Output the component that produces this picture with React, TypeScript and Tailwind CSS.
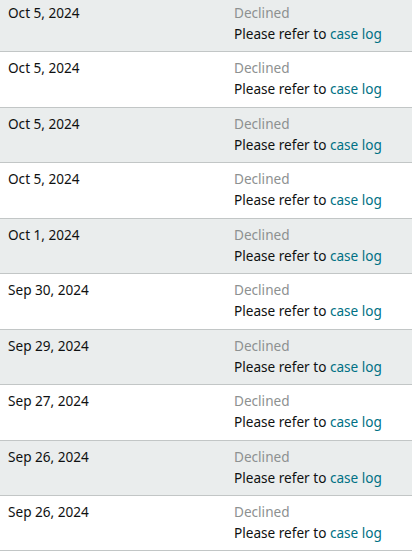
import React from "react";

interface Entry {
  date: string;
  status: string;
}

const entries: Entry[] = [
  { date: "Oct 5, 2024", status: "Declined" },
  { date: "Oct 5, 2024", status: "Declined" },
  { date: "Oct 5, 2024", status: "Declined" },
  { date: "Oct 5, 2024", status: "Declined" },
  { date: "Oct 1, 2024", status: "Declined" },
  { date: "Sep 30, 2024", status: "Declined" },
  { date: "Sep 29, 2024", status: "Declined" },
  { date: "Sep 27, 2024", status: "Declined" },
  { date: "Sep 26, 2024", status: "Declined" },
  { date: "Sep 26, 2024", status: "Declined" },
];

export default function App() {
  return (
    <div className="w-[412px] h-[555px] overflow-hidden bg-white font-['Noto_Sans',sans-serif] text-[13.6px] leading-[21px] text-[#0f1111]">
      <div className="-mt-[3px]">
        {entries.map((entry, index) => (
          <div
            key={index}
            className={`grid grid-cols-[234px_1fr] h-[55.45px] pt-[5px] border-b border-[#c2c6c6] ${
              index % 2 === 0 ? "bg-[#eaeded]" : "bg-white"
            }`}
          >
            <div className="pl-2">{entry.date}</div>
            <div>
              <div className="text-[#8d9191]">{entry.status}</div>
              <div>
                Please refer to <span className="text-[#007185]">case log</span>
              </div>
            </div>
          </div>
        ))}
      </div>
    </div>
  );
}
